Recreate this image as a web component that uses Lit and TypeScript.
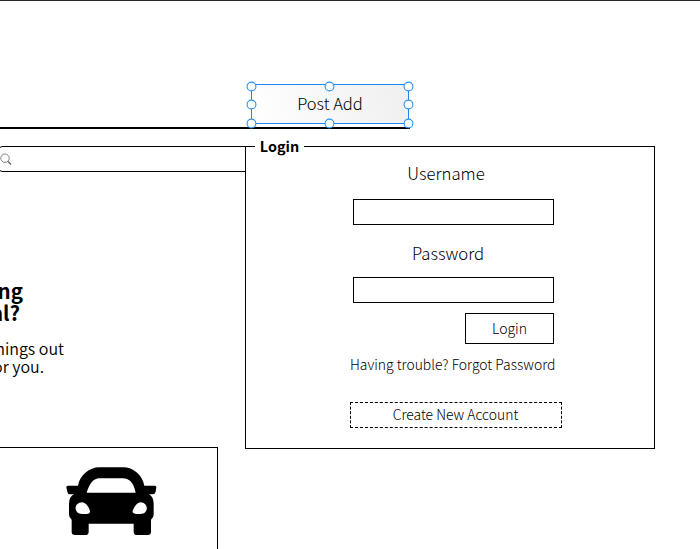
import { LitElement, html, svg, css } from "lit";
import { customElement } from "lit/decorators.js";

@customElement("selection-frame")
class SelectionFrame extends LitElement {
  static styles = css`
    :host { position: absolute; inset: 0; border: 1px solid #1e86f0; box-sizing: border-box; }
    svg { position: absolute; left: -6px; top: -5px; width: 169px; height: 50px; overflow: visible; }
    circle { fill: #fff; stroke: #2b93ee; stroke-width: 1.1; }
  `;
  render() {
    const points = [[5.5, 6.5], [83.5, 6.5], [162.5, 6.5], [5.5, 24.5], [162.5, 24.5], [5.5, 43.5], [83.5, 43.5], [162.5, 43.5]];
    return html`<svg viewBox="0 0 169 50">
      ${points.map(([x, y]) => svg`<circle cx=${x} cy=${y} r="4.4"></circle>`)}
    </svg>`;
  }
}

@customElement("app-root")
class AppRoot extends LitElement {
  static styles = css`
    :host {
      display: block; box-sizing: border-box; width: 700px; height: 549px; overflow: hidden;
      background: #fff; color: #000; border-top: 1px solid #262626;
      font-family: "Noto Sans CJK SC", "Noto Sans", sans-serif; font-weight: 300;
    }
    .header {
      box-sizing: border-box; width: 410px; height: 128px; border-bottom: 2px solid #000;
      display: flex; justify-content: flex-end; align-items: flex-end; padding: 0 1px 3px 0;
    }
    .post {
      position: relative; width: 158px; height: 40px; line-height: 38px; text-align: center;
      font-size: 16.5px; background: linear-gradient(70deg, #fff, #efefef);
    }
    .body { display: flex; align-items: flex-start; padding-top: 17px; }
    .left { width: 245px; height: 403px; display: flex; flex-direction: column; overflow: hidden; }
    .search {
      box-sizing: border-box; height: 26px; margin-left: -2px; border: 1px solid #000; border-right: 0;
      border-radius: 5px 0 0 5px; flex: none; padding: 6px 0 0 1px;
    }
    .search svg { display: block; width: 12px; height: 13px; }
    .line { display: flex; justify-content: flex-end; white-space: nowrap; flex: none; }
    .title { font-weight: 700; font-size: 20.5px; line-height: 22px; }
    .copy { font-weight: 350; font-size: 16px; line-height: 18px; }
    .t1 { width: 23px; margin-top: 107px; }
    .t2 { width: 20px; }
    .c1 { width: 64px; margin-top: 16px; }
    .c2 { width: 44px; }
    .card {
      box-sizing: border-box; width: 218px; height: 110px; margin-top: 72px; flex: none;
      border: 1px solid #000; border-left: 0; border-bottom: 0; padding: 19px 0 0 66px;
    }
    .car { display: block; width: 91px; height: 69px; }
    .panel {
      box-sizing: border-box; width: 410px; height: 303px; border: 1px solid #000;
      display: flex; flex-direction: column;
    }
    .legend {
      align-self: flex-start; width: 49px; text-align: center; background: #fff; margin: -11px 0 1px 9px;
      font-weight: 700; font-size: 14.4px; line-height: 20px; height: 20px;
    }
    .label { width: 204px; margin-left: 98px; text-align: center; font-size: 16.7px; line-height: 24px; height: 24px; }
    .user { margin-top: 4px; }
    .pass { margin: 16px 0 0 100px; }
    .field { box-sizing: border-box; width: 201px; height: 26px; border: 1px solid #000; margin: 14px 0 0 107px; }
    .field.second { margin-top: 12px; }
    .button {
      box-sizing: border-box; width: 89px; height: 31px; margin: 10px 0 0 219px; border: 1px solid #000;
      text-align: center; font-size: 14px; line-height: 29px;
    }
    .help { margin: 10px 0 0 104px; width: 206px; white-space: nowrap; font-size: 13.9px; line-height: 20px; }
    .create {
      box-sizing: border-box; width: 212px; height: 26px; margin: 28px 0 0 104px; border: 1px dashed #000;
      text-align: center; font-size: 13.9px; line-height: 23px; padding-right: 1px;
    }
  `;
  render() {
    return html`
      <div class="header"><div class="post"><span>Post Add</span><selection-frame></selection-frame></div></div>
      <div class="body">
        <div class="left">
          <div class="search">
            <svg viewBox="0 0 12 13" fill="none" stroke="#666">
              <circle cx="5" cy="5.2" r="4.2" stroke-width="0.8"></circle>
              <path d="M8 8.5 L11 11.5" stroke-width="1.4"></path>
            </svg>
          </div>
          <div class="line title t1">ng</div>
          <div class="line title t2">al?</div>
          <div class="line copy c1">hings out</div>
          <div class="line copy c2">or you.</div>
          <div class="card">
            <svg class="car" viewBox="49 80 273 207">
              <path fill-rule="evenodd" d="M85 136 C91 105 119 81 149 81 H220 C251 81 278 104 284 136 H316 Q320 136 320 141 L318 154 Q316 162 308 162 H298 Q312 170 312 190 V223 Q312 231 304 238 V275 Q304 284 294 284 H262 Q252 284 252 274 V250 H117 V274 Q117 284 107 284 H76 Q66 284 66 275 V238 Q58 231 58 223 V190 Q58 170 73 162 H61 Q54 162 53 154 L50 141 Q50 136 54 136 Z
                M111 157 H258 Q249 114 220 114 H149 Q124 114 111 157 Z
                M98 186 C71 187 71 221 98 221 H111 Q124 219 120 209 Q112 188 98 186 Z
                M272 186 C298 187 298 221 272 221 H259 Q245 219 250 209 Q259 188 272 186 Z"></path>
            </svg>
          </div>
        </div>
        <div class="panel">
          <div class="legend">Login</div>
          <div class="label user">Username</div>
          <div class="field"></div>
          <div class="label pass">Password</div>
          <div class="field second"></div>
          <div class="button">Login</div>
          <div class="help">Having trouble? Forgot Password</div>
          <div class="create">Create New Account</div>
        </div>
      </div>`;
  }
}
